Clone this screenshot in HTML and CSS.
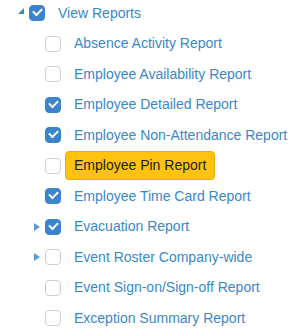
FILE: index.html
```html
<!DOCTYPE html>
<html lang="en">
<head>
    <meta charset="UTF-8">
    <title>Report Permissions</title>
    <link rel="stylesheet" href="styles.css">
</head>
<body>
    <ul class="tree">
        <li>
            <div class="row">
                <span class="toggle collapse"></span>
                <span class="check checked"></span>
                <span class="label">View Reports</span>
            </div>
            <ul class="tree-group">
                <li><div class="row"><span class="toggle"></span><span class="check"></span><span class="label">Absence Activity Report</span></div></li>
                <li><div class="row"><span class="toggle"></span><span class="check"></span><span class="label">Employee Availability Report</span></div></li>
                <li><div class="row"><span class="toggle"></span><span class="check checked"></span><span class="label">Employee Detailed Report</span></div></li>
                <li><div class="row"><span class="toggle"></span><span class="check checked"></span><span class="label">Employee Non-Attendance Report</span></div></li>
                <li><div class="row"><span class="toggle"></span><span class="check"></span><span class="label selected">Employee Pin Report</span></div></li>
                <li><div class="row"><span class="toggle"></span><span class="check checked"></span><span class="label">Employee Time Card Report</span></div></li>
                <li><div class="row"><span class="toggle expand"></span><span class="check checked"></span><span class="label">Evacuation Report</span></div></li>
                <li><div class="row"><span class="toggle expand"></span><span class="check"></span><span class="label">Event Roster Company-wide</span></div></li>
                <li><div class="row"><span class="toggle"></span><span class="check"></span><span class="label">Event Sign-on/Sign-off Report</span></div></li>
                <li><div class="row"><span class="toggle"></span><span class="check"></span><span class="label">Exception Summary Report</span></div></li>
            </ul>
        </li>
    </ul>
</body>
</html>
```
FILE: styles.css
```css
body {
    margin: 0;
    background: #fff;
    font-family: "Liberation Sans", Arial, sans-serif;
    font-size: 14px;
    color: #3a87c9;
    overflow: hidden;
}
ul {
    list-style: none;
    margin: 0;
    padding: 0;
}
.tree {
    margin-top: -2px;
    padding-left: 13px;
}
.tree-group {
    padding-left: 16px;
}
.row {
    display: flex;
    align-items: center;
    height: 30.5px;
}
.toggle {
    width: 16px;
    height: 16px;
    flex: none;
    position: relative;
}
.toggle.collapse::after {
    content: "";
    position: absolute;
    left: 5px;
    top: 3px;
    border-style: solid;
    border-width: 0 0 6px 6px;
    border-color: transparent transparent #3a87c9 transparent;
}
.toggle.expand::after {
    content: "";
    position: absolute;
    left: 5px;
    top: 4px;
    border-style: solid;
    border-width: 4px 0 4px 6px;
    border-color: transparent transparent transparent #5a9bd6;
}
.check {
    width: 16px;
    height: 16px;
    box-sizing: border-box;
    border: 1px solid #cfcfcf;
    border-radius: 4px;
    background: #fff;
    flex: none;
    margin-right: 4px;
    position: relative;
}
.check.checked {
    background: #3b84cc;
    border-color: #3b84cc;
}
.check.checked::after {
    content: "";
    position: absolute;
    left: 3px;
    top: 2px;
    width: 7px;
    height: 4px;
    border-left: 2.5px solid #fff;
    border-bottom: 2.5px solid #fff;
    transform: rotate(-45deg);
    transform-origin: center;
}
.label {
    padding: 5px 8px;
    border: 1px solid transparent;
    border-radius: 4px;
    line-height: 17px;
    white-space: nowrap;
}
.label.selected {
    background: #ffc20e;
    border-color: #eeaa00;
    color: #1d1d1d;
}
```
